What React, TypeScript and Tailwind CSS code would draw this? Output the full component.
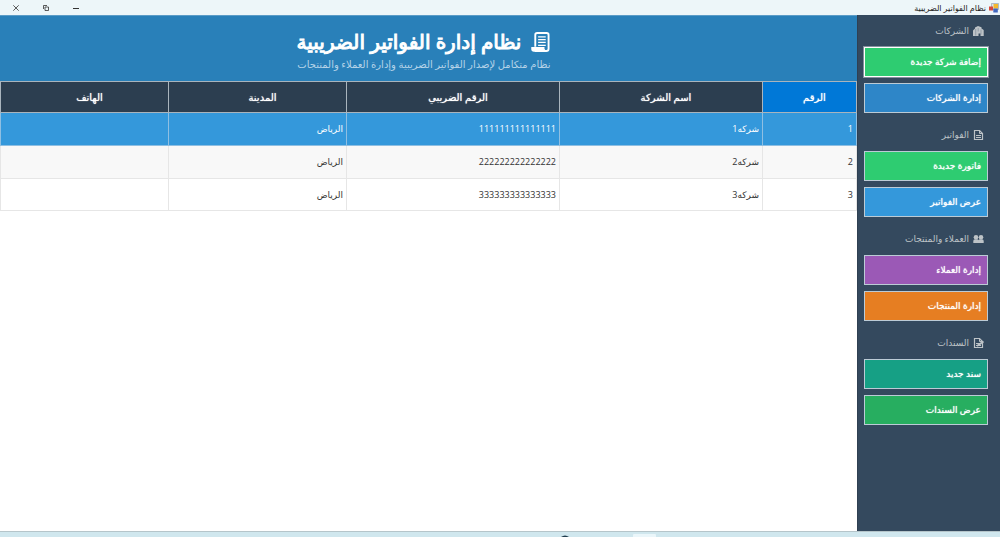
import clsx from "clsx";

const sections = [
  {
    title: "الشركات",
    icon: "companies",
    items: [
      { label: "إضافة شركة جديدة", color: "bg-[#2ecc71]", focused: true },
      { label: "إدارة الشركات", color: "bg-[#2e86c8]" },
    ],
  },
  {
    title: "الفواتير",
    icon: "invoices",
    items: [
      { label: "فاتورة جديدة", color: "bg-[#2ecc71]" },
      { label: "عرض الفواتير", color: "bg-[#3498db]" },
    ],
  },
  {
    title: "العملاء والمنتجات",
    icon: "clients",
    items: [
      { label: "إدارة العملاء", color: "bg-[#9b59b6]" },
      { label: "إدارة المنتجات", color: "bg-[#e67e22]" },
    ],
  },
  {
    title: "السندات",
    icon: "vouchers",
    items: [
      { label: "سند جديد", color: "bg-[#16a085]" },
      { label: "عرض السندات", color: "bg-[#27ae60]" },
    ],
  },
];

const columns = [
  { title: "الرقم", width: "w-[94px]" },
  { title: "اسم الشركة", width: "w-[203px]" },
  { title: "الرقم الضريبي", width: "w-[213px]" },
  { title: "المدينة", width: "w-[178px]" },
  { title: "الهاتف", width: "" },
];

const companies = [
  { id: 1, name: "شركه1", taxNumber: "111111111111111", city: "الرياض", phone: "" },
  { id: 2, name: "شركه2", taxNumber: "222222222222222", city: "الرياض", phone: "" },
  { id: 3, name: "شركه3", taxNumber: "333333333333333", city: "الرياض", phone: "" },
];

const SectionIcon = ({ name }: { name: string }) => {
  if (name === "companies") {
    return (
      <svg viewBox="0 0 11 10" className="h-[10px] w-[11px]" fill="#bdc3c7">
        <path d="M0 4.500 2 2.500V1.500L5 0l3.500 1.200v1.300L10.700 4v6H7.500V7.500h-2V10H0z" />
        <path d="M2.700 3v6.500M5.200 2v3.500M8 3.500v5" stroke="#7f8d9b" strokeWidth=".7" />
      </svg>
    );
  }
  if (name === "clients") {
    return (
      <svg viewBox="0 0 11 10" className="h-[10px] w-[11px]" fill="#bdc3c7">
        <circle cx="3" cy="3.300" r="2.300" />
        <circle cx="8" cy="3.300" r="2.300" />
        <path d="M.3 9V7Q.3 5.300 2 5.300h2q1.300 0 1.500 1 .2-1 1.500-1h2q1.700 0 1.700 1.700v2z" />
      </svg>
    );
  }
  return (
    <svg
      viewBox="0 0 11 10"
      className="h-[10px] w-[11px]"
      fill="none"
      stroke="#bdc3c7"
    >
      <path d="M1.500.5h5l3 3v6h-8z" strokeWidth="1.200" />
      <path d="M6.500.5v3h3" />
      <path d="M3 5.500h5M3 7.500h5" strokeWidth="1.100" />
      {name === "vouchers" && <path d="M4 8 10.500 3.500" strokeWidth="2" />}
    </svg>
  );
};

const ReceiptIcon = () => (
  <svg viewBox="0 0 20 22" className="h-[22px] w-[19px]" fill="none" stroke="#fff">
    <path
      d="M4.500 16V3.500q0-2 2-2h10q2 0 2 2V18q0 2.500-2.500 2.500H4"
      strokeWidth="2"
    />
    <path d="M7.500 5.500h8M7.500 8.500h8M7.500 11.500h8M7.500 14.500h8" strokeWidth="1.300" />
    <path d="M1 17h12.500v1.500l1.500 2H3q-2 0-2-2z" fill="#fff" strokeWidth="1.400" />
  </svg>
);

const AppIcon = () => (
  <svg viewBox="0 0 10 10" className="h-[10px] w-[10px]">
    <path d="M2.500.5h7v6h-7z" fill="#dce4ea" stroke="#8b98a5" strokeWidth=".6" />
    <path d="M4.500 1h4.500v4.500h-4.500z" fill="#f4b92f" />
    <path d="M0 3.500h4v4H0z" fill="#d5493c" />
    <path d="M4.300 5.500h4.500v4H4.300z" fill="#4267bd" />
  </svg>
);

const TitleBar = () => (
  <header className="flex h-[15px] shrink-0 items-center justify-between bg-[#edf6f9]">
    <div className="flex items-center gap-[3px] pr-px text-[8px] leading-[15px] text-[#222]">
      <AppIcon />
      <h1>نظام الفواتير الضريبية</h1>
    </div>
    <div className="flex">
      <button aria-label="تصغير" className="flex h-[15px] w-[30px] items-center justify-center">
        <svg viewBox="0 0 6 6" className="h-[6px] w-[6px]" stroke="#333" fill="none">
          <path d="M0 3.500h6" />
        </svg>
      </button>
      <button aria-label="استعادة" className="flex h-[15px] w-[30px] items-center justify-center">
        <svg viewBox="0 0 6 6" className="h-[6px] w-[6px]" stroke="#333" strokeWidth=".8" fill="none">
          <path d="M2 2h3.500v3.500H2z" />
          <path d="M.5 4V.5H4" />
        </svg>
      </button>
      <button aria-label="إغلاق" className="flex h-[15px] w-[31px] items-center justify-center">
        <svg viewBox="0 0 6 6" className="h-[6px] w-[6px]" stroke="#333" strokeWidth=".8" fill="none">
          <path d="m.3.3 5.400 5.400M5.700.3.300 5.700" />
        </svg>
      </button>
    </div>
  </header>
);

const Sidebar = () => (
  <nav className="flex w-[143px] shrink-0 flex-col gap-[14px] border-l border-[#2f4052] bg-[#34495e] pt-2 pr-3 pl-[6px]">
    {sections.map((section) => (
      <section key={section.title}>
        <h3 className="mb-2 flex h-4 items-center gap-1 pr-1 text-[9px] leading-4 text-[#bdc3c7]">
          <SectionIcon name={section.icon} />
          {section.title}
        </h3>
        <div className="flex flex-col gap-[6px]">
          {section.items.map((item) => (
            <button
              key={item.label}
              className={clsx(
                "h-[30px] border px-[6px] text-right text-[9px] font-medium text-white text-shadow-[0_0_1px_#fff]",
                item.color,
                item.focused ? "border-white ring-1 ring-white/40" : "border-[#bccbd6]"
              )}
            >
              {item.label}
            </button>
          ))}
        </div>
      </section>
    ))}
  </nav>
);

const CompaniesTable = () => (
  <table className="w-full table-fixed border-collapse text-[9px]">
    <thead>
      <tr className="h-[31px]">
        {columns.map((column, i) => (
          <th
            key={column.title}
            className={clsx(
              "border border-[#a9b4bd] pr-0 pl-[10px] text-[10px] font-medium text-white text-shadow-[0_0_1px_#fff]",
              column.width,
              i === 0 ? "bg-[#0078d7]" : "bg-[#2c3e50]"
            )}
          >
            {column.title}
          </th>
        ))}
      </tr>
    </thead>
    <tbody>
      {companies.map((company, i) => (
        <tr
          key={company.id}
          className={clsx(
            "*:border *:px-[3px]",
            i === 0 && "h-[33px] bg-[#3498db] text-white *:border-[#8fbfe2]",
            i === 1 && "h-[33px] bg-[#f8f8f8] text-[#333] *:border-[#e6e6e6]",
            i === 2 && "h-8 bg-white text-[#333] *:border-[#e6e6e6]"
          )}
        >
          <td>{company.id}</td>
          <td>{company.name}</td>
          <td>{company.taxNumber}</td>
          <td>{company.city}</td>
          <td>{company.phone}</td>
        </tr>
      ))}
    </tbody>
  </table>
);

export default function App() {
  return (
    <div
      dir="rtl"
      className="flex h-screen flex-col overflow-hidden bg-white font-['Open_Sans','DejaVu_Sans',sans-serif]"
    >
      <TitleBar />
      <div className="flex min-h-0 flex-1">
        <Sidebar />
        <main className="min-w-0 flex-1">
          <div className="flex h-[66px] flex-col items-center justify-center border-t border-[#5b9cc7] bg-[#2980b9] pt-[3px] pr-[10px]">
            <div>
              <h2 className="flex items-center gap-[10px] text-[20px] leading-7 font-medium text-white [-webkit-text-stroke:1px_#fff]">
                <ReceiptIcon />
                نظام إدارة الفواتير الضريبية
              </h2>
              <p className="text-[10px] leading-4 text-[#b5d3e8]">
                نظام متكامل لإصدار الفواتير الضريبية وإدارة العملاء والمنتجات
              </p>
            </div>
          </div>
          <CompaniesTable />
        </main>
      </div>
      <footer className="flex h-[6px] shrink-0 border-t border-[#b5c5ca] bg-[#d0e7ee] pr-[340px]">
        <svg viewBox="0 0 102 5" className="h-[5px] w-[102px]">
          <path d="M3 5q4-3 8 0z" fill="#1f3c4d" />
          <path d="M75 3q0-1 1-1h21q1 0 1 1v2H75z" fill="#eaf6fa" />
        </svg>
      </footer>
    </div>
  );
}
